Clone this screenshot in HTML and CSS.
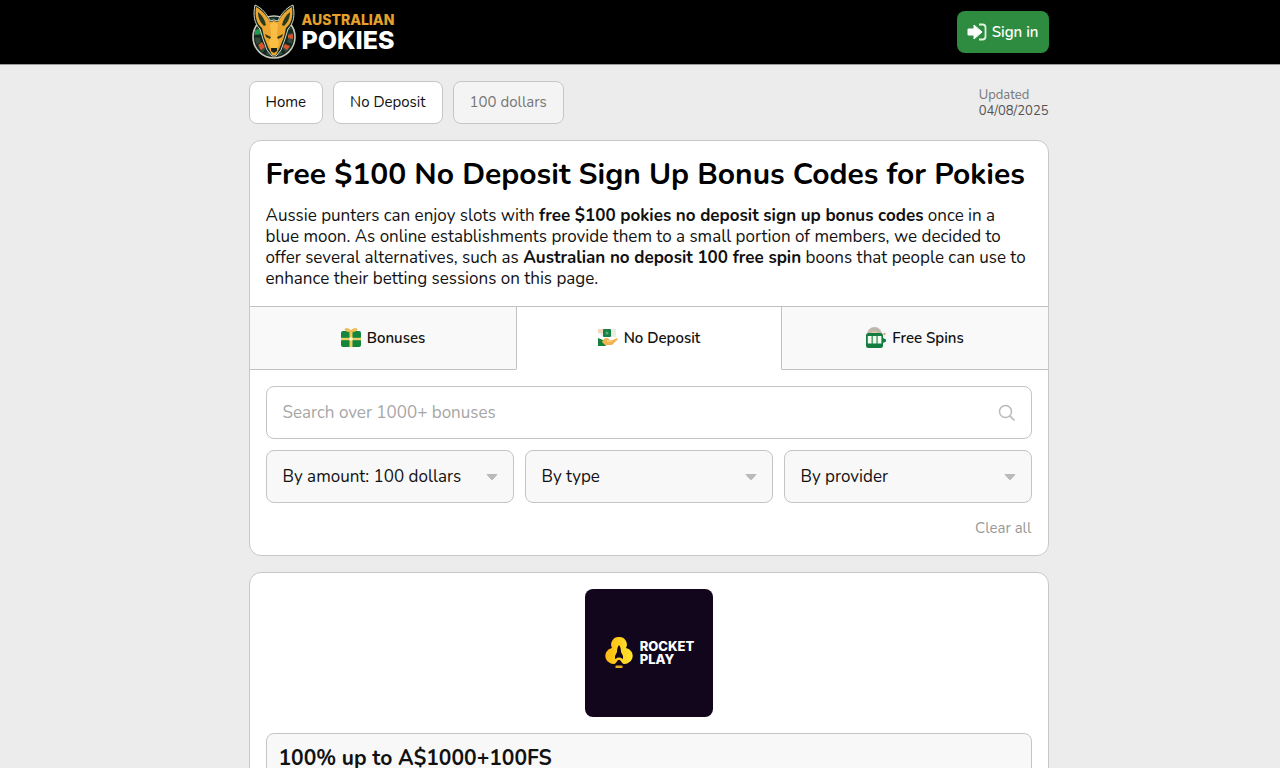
FILE: index.html
```html
<!DOCTYPE html>
<html lang="en-AU">
<head>
<meta charset="utf-8">
<meta name="viewport" content="width=device-width, initial-scale=1">
<title>Free $100 No Deposit Sign Up Bonus Codes for Pokies</title>
<link rel="stylesheet" href="styles.css">
</head>
<body>
<header class="site-header">
  <div class="container header-row">
    <a class="brand" href="#">
      <svg class="brand-mark" viewBox="0 0 48 56" aria-hidden="true">
        <circle cx="24" cy="33" r="21" fill="#14291f" stroke="#c9c9bd" stroke-width="1.600"/>
        <circle cx="24" cy="33" r="16.500" fill="none" stroke="#33493d" stroke-width="5" stroke-dasharray="6 3"/>
        <path d="M5 26l5-1 1 5-6 1z" fill="#1c9b48"/>
        <path d="M38 31l5-1v5l-5-1zM35 40l5 2-3 4-4-3zM8 41l4-3 3 5-4 3z" fill="#d4552d"/>
        <path d="M5 1C12 4 17 10 20 17l4-1 4 1C31 10 36 4 43 1c2 10 1 18-5 24l-3 10-4 11-5 6h-4l-5-6-4-11-3-10C4 19 3 11 5 1z" fill="#10271d" stroke="#d4d4c8" stroke-width="1"/>
        <path d="M6 3c7 4 11 9 14 15l4-1 4 1c3-6 7-11 14-15 1 9 0 16-6 21l-2 9-4 10-4 8h-4l-4-8-4-10-2-9C6 19 5 12 6 3z" fill="#eba62f"/>
        <path d="M8 8c4 3 7 8 8 13l-2 1C10 18 8 14 8 8zM40 8c-4 3-7 8-8 13l2 1c4-4 6-8 6-14z" fill="#293a22"/>
        <path d="M20 20l4-2 4 2-1 10 2 9-2 6h-6l-2-6 2-9z" fill="#fbbe45"/>
        <path d="M15 30l6 3-1 2-4-2zM33 30l-6 3 1 2 4-2z" fill="#3b3519"/>
        <path d="M21 44h6v3l-3 2-3-2z" fill="#15201a"/>
      </svg>
      <span class="brand-text"><span class="brand-top">AUSTRALIAN</span><span class="brand-bottom">POKIES</span></span>
    </a>
    <button class="sign-in" type="button">
      <svg width="20" height="18" viewBox="0 0 20 18" aria-hidden="true"><path d="M1 6h6V2l8 7-8 7v-4H1z" fill="#fff" stroke="#fff" stroke-linejoin="round"/><path d="M12 1.500h3.500a3 3 0 0 1 3 3v9a3 3 0 0 1-3 3H12" fill="none" stroke="#e3f2e5" stroke-width="1.800"/></svg>
      Sign in
    </button>
  </div>
</header>
<main class="container page">
  <div class="top-row">
    <nav class="crumbs" aria-label="Breadcrumb">
      <a class="crumb" href="#">Home</a>
      <a class="crumb" href="#">No Deposit</a>
      <span class="crumb crumb-current" aria-current="page">100 dollars</span>
    </nav>
    <div class="updated"><span>Updated</span><time datetime="2025-08-04">04/08/2025</time></div>
  </div>
  <section class="card">
    <div class="intro">
      <h1>Free $100 No Deposit Sign Up Bonus Codes for Pokies</h1>
      <p>Aussie punters can enjoy slots with <b>free $100 pokies no deposit sign up bonus codes</b> once in a blue moon. As online establishments provide them to a small portion of members, we decided to offer several alternatives, such as <b>Australian no deposit 100 free spin</b> boons that people can use to enhance their betting sessions on this page.</p>
    </div>
    <nav class="tabs" aria-label="Bonus category">
      <a class="tab" href="#">
        <svg width="22" height="22" viewBox="0 0 22 22" aria-hidden="true"><rect x="1" y="4" width="20" height="8" rx="2" fill="#14863d"/><rect x="1" y="12" width="20" height="8" rx="2" fill="#12863a"/><path d="M1 10.800h20v2.400H1z" fill="#e8cf66"/><path d="M9.500 4h3v16h-3z" fill="#f0cd5c"/><path d="M11 5C8 5 5 4 5 2c2-1 5 0 6 2 1-2 4-3 6-2 0 2-3 3-6 3z" fill="#f2c75c" stroke="#e9af45" stroke-width=".8"/><circle cx="11" cy="12" r="1.800" fill="#fff8ce"/></svg>
        Bonuses
      </a>
      <a class="tab tab-active" href="#" aria-current="true">
        <svg width="22" height="22" viewBox="0 0 22 22" aria-hidden="true"><path d="M2 2h17v8H6L2 6z" fill="#e9eee5"/><path d="M1 2h5v4H1z" fill="#f4d5bb"/><rect x="6" y="2" width="8" height="8" rx="1" fill="#168244"/><circle cx="10" cy="6" r="1.500" fill="#58ae75"/><path d="M1 11l5 2 3 6H1z" fill="#13803d"/><path d="M6 13c3-3 5-2 7 0h3l4-2c1 1 1 2-1 3l-4 4H8l-3-3z" fill="#efb44f"/><path d="M10 14h5" stroke="#ffe0a0"/></svg>
        No Deposit
      </a>
      <a class="tab" href="#">
        <svg width="22" height="22" viewBox="0 0 22 22" aria-hidden="true"><path d="M2 8a7.500 8 0 0 1 15 0z" fill="#bdb7ad"/><path d="M5 7a5 5 0 0 1 9 0z" fill="#e4caa1"/><rect x="1" y="6" width="17" height="15" rx="2.500" fill="#137d41"/><path d="M2.800 9h3.800v7.500H2.800zM7.700 9h3.800v7.500H7.700zM12.600 9h3.800v7.500h-3.800z" fill="#f4faed"/><path d="M18 11l3 1.500v2L18 16z" fill="#137d41"/><circle cx="19.500" cy="7" r="1.300" fill="#efa58e"/></svg>
        Free Spins
      </a>
    </nav>
    <form class="filters">
      <div class="field">
        <input class="control" type="search" aria-label="Search bonuses" placeholder="Search over 1000+ bonuses">
        <svg class="field-icon" width="18" height="18" viewBox="0 0 18 18" aria-hidden="true"><circle cx="7.500" cy="7.500" r="6" fill="none" stroke="#b9b9b9" stroke-width="1.500"/><path d="M12 12l4.500 4.500" stroke="#b9b9b9" stroke-width="1.700"/></svg>
      </div>
      <div class="selects">
        <div class="field">
          <select class="control" aria-label="By amount"><option>By amount: 100 dollars</option></select>
          <svg class="field-icon" width="12" height="8" viewBox="0 0 12 8" aria-hidden="true"><path d="M1 1.500h10L7 6q-1 1-2 0z" fill="#bababa" stroke="#bababa" stroke-linejoin="round"/></svg>
        </div>
        <div class="field">
          <select class="control" aria-label="By type"><option>By type</option></select>
          <svg class="field-icon" width="12" height="8" viewBox="0 0 12 8" aria-hidden="true"><path d="M1 1.500h10L7 6q-1 1-2 0z" fill="#bababa" stroke="#bababa" stroke-linejoin="round"/></svg>
        </div>
        <div class="field">
          <select class="control" aria-label="By provider"><option>By provider</option></select>
          <svg class="field-icon" width="12" height="8" viewBox="0 0 12 8" aria-hidden="true"><path d="M1 1.500h10L7 6q-1 1-2 0z" fill="#bababa" stroke="#bababa" stroke-linejoin="round"/></svg>
        </div>
      </div>
      <button class="clear" type="reset">Clear all</button>
    </form>
  </section>
  <article class="card casino">
    <a class="casino-logo" href="#">
      <svg width="32" height="34" viewBox="0 0 32 34" aria-hidden="true"><defs><linearGradient id="gold"><stop offset="0" stop-color="#ffb911"/><stop offset="1" stop-color="#ffe52e"/></linearGradient></defs><path d="M16 1a7.500 7.500 0 0 1 7 11 8 8 0 1 1-5 15h-4A8 8 0 1 1 9 12a7.500 7.500 0 0 1 7-11z" fill="url(#gold)"/><path d="M16 9c1.500 2 2 4 2 7l2 4v3l-3-1.500h-2L12 23v-3l2-4c0-3 .5-5 2-7z" fill="#12061d"/><path d="M15 24h2l3 4h-8z" fill="#12061d"/><rect x="12.500" y="29.500" width="7" height="2.500" rx=".6" fill="#e9af1a"/></svg>
      <span>ROCKET<br>PLAY</span>
    </a>
    <div class="offer"><h2>100% up to A$1000+100FS</h2></div>
  </article>
</main>
</body>
</html>
```
FILE: styles.css
```css
*, *::before, *::after { box-sizing: border-box; }
body {
  margin: 0;
  padding-bottom: 16px;
  background: #ececec;
  color: #111;
  font: 17px/21px Nunito, Lato, sans-serif;
}
a { color: inherit; text-decoration: none; }
button, input, select { font: inherit; }
h1, h2, p { margin: 0; }
svg { flex: none; }
.site-header, .page { padding-left: 17px; }
.container { width: 100%; max-width: 817px; margin: 0 auto; }
.site-header { background: #000; border-bottom: 1px solid #999; }
.site-header .container { max-width: 800px; }
.header-row {
  display: flex;
  align-items: center;
  justify-content: space-between;
  min-height: 64px;
}
.brand { display: flex; align-items: center; gap: 4px; padding-left: 1px; }
.brand-mark { width: 48px; height: 56px; }
.brand-text { display: flex; flex-direction: column; color: #fff; font-family: Inter, sans-serif; font-weight: 800; }
.brand-top { color: #e5a12b; font-size: 14px; line-height: 16px; }
.brand-bottom { font-size: 25px; line-height: 25px; }
.sign-in {
  display: flex;
  align-items: center;
  gap: 5px;
  height: 42px;
  padding: 0 10px;
  border: 0;
  border-radius: 8px;
  background: #2d8c3f;
  color: #fff;
  font-size: 15px;
  font-weight: 600;
}
.page { padding-top: 16px; }
.top-row { display: flex; align-items: center; justify-content: space-between; margin-bottom: 16px; }
.crumbs { display: flex; gap: 10px; }
.crumb {
  padding: 10px 16px 11px;
  border: 1px solid #c6c6c6;
  border-radius: 8px;
  background: #fff;
  font-size: 15px;
  line-height: 20px;
}
.crumb-current { background: #f4f4f4; color: #777; }
.updated { display: flex; flex-direction: column; font-size: 13px; line-height: 16px; color: #777; }
.updated time { color: #555; }
.card { margin-bottom: 16px; border: 1px solid #c8c8c8; border-radius: 12px; background: #fff; overflow: hidden; }
.intro { padding: 15px 16px 17px; }
h1 { margin-bottom: 12px; color: #000; font-size: 30px; line-height: 37px; }
.tabs { display: grid; grid-template-columns: repeat(3, 1fr); }
.tab {
  display: flex;
  align-items: center;
  justify-content: center;
  gap: 5px;
  min-height: 64px;
  border-top: 1px solid #c1c1c1;
  border-bottom: 1px solid #c1c1c1;
  background: #f9f9f9;
  font-size: 15px;
  font-weight: 600;
}
.tab-active { background: #fff; border-bottom-color: #fff; border-left: 1px solid #c1c1c1; border-right: 1px solid #c1c1c1; }
.filters { display: flex; flex-direction: column; gap: 11px; padding: 16px; }
.field { position: relative; min-width: 0; }
.control {
  display: block;
  width: 100%;
  height: 53px;
  padding: 0 16px;
  border: 1px solid #c4c4c4;
  border-radius: 8px;
  background: #fff;
  color: #111;
  appearance: none;
}
.control::placeholder { color: #a6a6a6; opacity: 1; }
.field-icon { position: absolute; top: 50%; right: 16px; transform: translateY(-50%); pointer-events: none; }
.selects { display: grid; grid-template-columns: repeat(3, 1fr); gap: 11px; }
.selects .control { background: #f8f8f8; padding-right: 36px; }
.clear { align-self: flex-end; margin-top: 4px; padding: 0; border: 0; background: none; color: #999; font-size: 15px; line-height: 21px; }
.casino { padding: 16px; }
.casino-logo {
  display: flex;
  align-items: center;
  justify-content: center;
  gap: 5px;
  width: 128px;
  height: 128px;
  margin: 0 auto 16px;
  border-radius: 8px;
  background: #12061d;
  color: #fff;
  font: 800 13px/13px Inter, sans-serif;
}
.offer { padding: 12px; border: 1px solid #c4c4c4; border-radius: 8px; background: #f8f8f8; }
h2 { font-size: 21px; line-height: 25px; }
```
